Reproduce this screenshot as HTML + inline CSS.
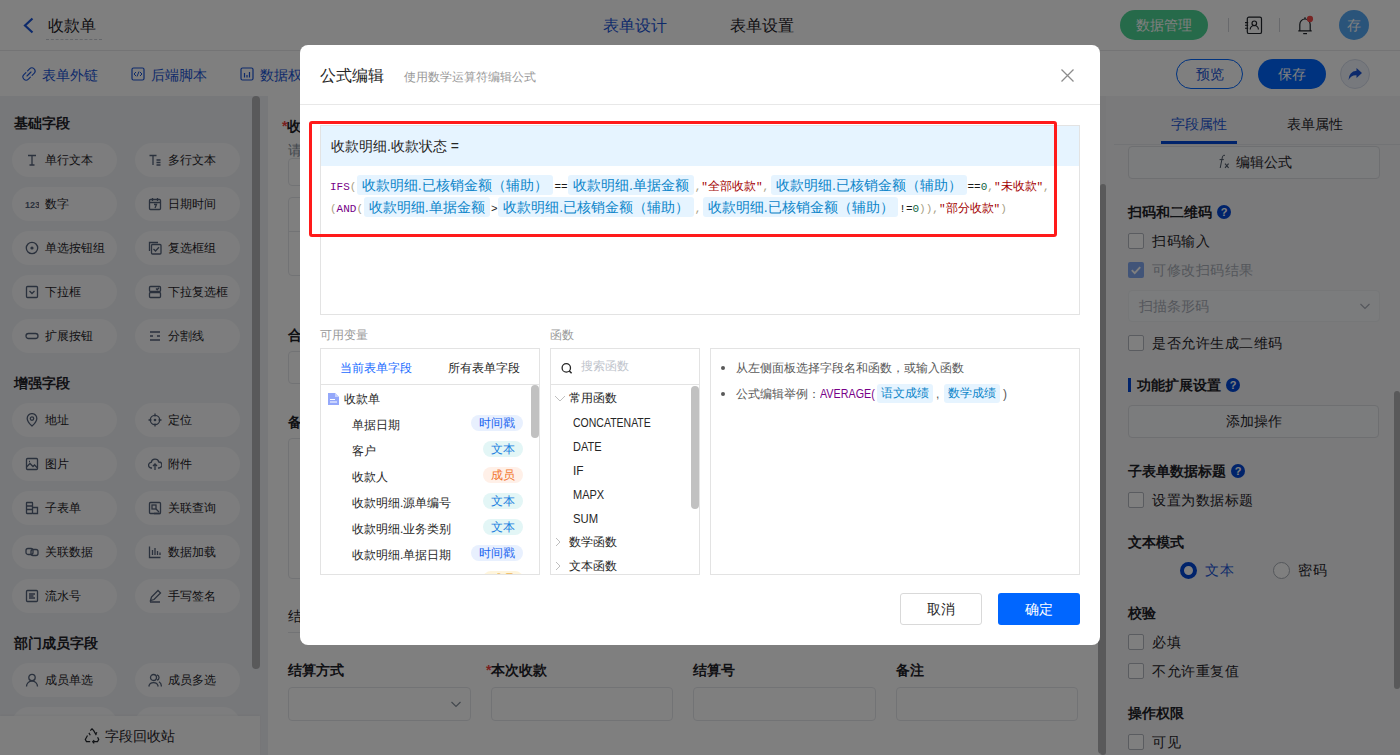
<!DOCTYPE html>
<html><head><meta charset="utf-8">
<style>
*{box-sizing:border-box;margin:0;padding:0}
html,body{width:1400px;height:755px;overflow:hidden;background:#fff}
body{font-family:"Liberation Sans",sans-serif;color:#1f2329;position:relative}
.a{position:absolute;white-space:nowrap}
svg{display:block}
/* header */
#hdr{left:0;top:0;width:1400px;height:51px;background:#fff;border-bottom:1px solid #e8e9eb}
#tb{left:0;top:51px;width:1400px;height:45px;background:#fff}
#lp{left:0;top:96px;width:268px;height:659px;background:#eff0f4}
#cv{left:268px;top:96px;width:838px;height:659px;background:#fff}
#rp{left:1106px;top:96px;width:294px;height:659px;background:#f4f5f6}
.h14b{font-size:14px;font-weight:bold;line-height:20px;color:#1f2329}
.chip{width:105px;height:34px;border-radius:17px;background:#fafbfc;font-size:12px;line-height:34px;color:#1f2329}
.chip i{position:absolute;left:15px;top:11px;width:12px;height:12px}
.chip span{position:absolute;left:33px;top:0}
#mask{left:0;top:0;width:1400px;height:755px;background:rgba(0,0,0,.5)}
#modal{left:300px;top:45px;width:800px;height:600px;background:#fff;border-radius:8px}
.mono{font-family:"Liberation Mono",monospace;font-size:11px;line-height:22px;height:22px}
.cj{font-size:12px}
.fchip{height:20px;border-radius:3px;background:#e6f4ff;color:#0b84c9;font-size:14px;line-height:20.5px;text-align:center}
.hchip{height:19.5px;border-radius:3px;background:#e6f4ff;color:#0b84c9;font-size:12px;line-height:19.5px;text-align:center}
</style></head><body>
<div id="hdr" class="a"></div>
<div id="tb" class="a"></div>
<div id="lp" class="a"></div>
<div id="cv" class="a"></div>
<div id="rp" class="a"></div>

<!-- header content -->
<svg class="a" style="left:22px;top:17px" width="13" height="17" viewBox="0 0 13 17"><path d="M10.5 1.5 L3 8.5 L10.5 15.5" fill="none" stroke="#1b55d6" stroke-width="2.2"/></svg>
<div class="a" style="left:48px;top:16px;font-size:16px;line-height:20px;color:#1f2329">收款单</div>
<div class="a" style="left:46px;top:39px;width:56px;height:0;border-top:1px dashed #c9cdd4"></div>
<div class="a" style="left:603px;top:16px;font-size:16px;line-height:20px;color:#1b55d6">表单设计</div>
<div class="a" style="left:730px;top:16px;font-size:16px;line-height:20px;color:#1f2329">表单设置</div>
<div class="a" style="left:1120px;top:10px;width:88px;height:30px;border-radius:15px;background:#4cd494;color:#fff;font-size:14px;line-height:30px;text-align:center">数据管理</div>
<div class="a" style="left:1228px;top:18px;width:1px;height:14px;background:#d0d3d8"></div>
<svg class="a" style="left:1244px;top:16px" width="20" height="19" viewBox="0 0 20 19"><rect x="3.3" y="1.2" width="14.2" height="16.3" rx="1.6" fill="none" stroke="#1f2329" stroke-width="1.2"/><circle cx="10.3" cy="7.3" r="2.3" fill="none" stroke="#1f2329" stroke-width="1.2"/><path d="M6.2 13.6a4.1 4.1 0 0 1 8.2 0" fill="none" stroke="#1f2329" stroke-width="1.2"/><path d="M1 6.6h3.2M1 9.3h3.2M1 12.2h3.2" stroke="#1f2329" stroke-width="1.1"/></svg>
<div class="a" style="left:1279px;top:18px;width:1px;height:14px;background:#d0d3d8"></div>
<svg class="a" style="left:1295px;top:15px" width="20" height="21" viewBox="0 0 20 21"><path d="M4.8 15.6V9.6a5.2 5.6 0 0 1 10.4 0V15.6M3.3 15.8H16.7" fill="none" stroke="#1f2329" stroke-width="1.2" stroke-linejoin="round"/><path d="M8.2 18.6H12" stroke="#1f2329" stroke-width="1.2"/><path d="M10 2.2V4" stroke="#1f2329" stroke-width="1.2"/><circle cx="15" cy="3.9" r="3.1" fill="#f04a48"/></svg>
<div class="a" style="left:1339px;top:10px;width:30px;height:30px;border-radius:15px;background:#55a8f5;color:#fff;font-size:14px;line-height:30px;text-align:center">存</div>

<!-- toolbar content -->
<svg class="a" style="left:22px;top:67px" width="14" height="14" viewBox="0 0 14 14"><path d="M5.6 3.9L7.6 1.9a2.9 2.9 0 0 1 4.5 4.5L10.1 8.4M8.4 10.1L6.4 12.1a2.9 2.9 0 0 1-4.5-4.5L3.9 5.6M5 9L9 5" fill="none" stroke="#1b55d6" stroke-width="1.1" stroke-linecap="round"/></svg>
<div class="a" style="left:42px;top:65px;font-size:14px;line-height:20px;color:#1b55d6">表单外链</div>
<svg class="a" style="left:131px;top:67px" width="14" height="14" viewBox="0 0 14 14"><rect x="1" y="1" width="12" height="12" rx="1.5" fill="none" stroke="#1b55d6" stroke-width="1.2"/><path d="M5 5 L3 7 L5 9 M9 5 L11 7 L9 9 M8 4.5 L6 9.5" fill="none" stroke="#1b55d6" stroke-width="1"/></svg>
<div class="a" style="left:151px;top:65px;font-size:14px;line-height:20px;color:#1b55d6">后端脚本</div>
<svg class="a" style="left:240px;top:67px" width="14" height="14" viewBox="0 0 14 14"><rect x="1" y="1" width="12" height="12" rx="1.5" fill="none" stroke="#1b55d6" stroke-width="1.2"/><path d="M4.5 6v4.5M7 8v2.5M9.5 5v5.5" stroke="#1b55d6" stroke-width="1.2"/></svg>
<div class="a" style="left:260px;top:65px;font-size:14px;line-height:20px;color:#1b55d6">数据权限</div>
<div class="a" style="left:1176px;top:59px;width:67px;height:30px;border-radius:15px;border:1px solid #0066ff;color:#1b55d6;font-size:14px;line-height:28px;text-align:center">预览</div>
<div class="a" style="left:1258px;top:59px;width:68px;height:30px;border-radius:15px;background:#0066ff;color:#fff;font-size:14px;line-height:30px;text-align:center">保存</div>
<div class="a" style="left:1340px;top:59px;width:30px;height:30px;border-radius:15px;background:#eef2fa;border:1px solid #d5dcea"></div>
<svg class="a" style="left:1347px;top:66px" width="16" height="16" viewBox="0 0 16 16"><path d="M9.5 2 L15 7 L9.5 12 V9.3 Q4 9 1.5 14 Q2 5.5 9.5 4.8 Z" fill="#1b55d6"/></svg>

<!-- left panel -->
<div class="a h14b" style="left:14px;top:113px">基础字段</div>
<div class="a h14b" style="left:14px;top:373px">增强字段</div>
<div class="a h14b" style="left:14px;top:633px">部门成员字段</div>
<div class="a chip" style="left:12px;top:143px"><svg class="a" style="left:13px;top:10px" width="14" height="14" viewBox="0 0 14 14"><path d="M3 2.5h8M7 2.5v9.5M4.5 12h5" stroke="#55627a" fill="none" stroke-width="1.3"/></svg><span>单行文本</span></div>
<div class="a chip" style="left:135px;top:143px"><svg class="a" style="left:13px;top:10px" width="14" height="14" viewBox="0 0 14 14"><path d="M1.5 2.5h7M5 2.5v9.5M8.5 7h4M8.5 9.5h4M8.5 12h4" stroke="#55627a" fill="none" stroke-width="1.3"/></svg><span>多行文本</span></div>
<div class="a chip" style="left:12px;top:187px"><svg class="a" style="left:13px;top:10px" width="14" height="14" viewBox="0 0 14 14"><text x="0" y="10.5" font-size="9" font-weight="bold" font-family="Liberation Sans" fill="#55627a">123</text></svg><span>数字</span></div>
<div class="a chip" style="left:135px;top:187px"><svg class="a" style="left:13px;top:10px" width="14" height="14" viewBox="0 0 14 14"><rect x="1.5" y="2.5" width="11" height="10" rx="1" stroke="#55627a" fill="none" stroke-width="1.3"/><path d="M1.5 5.5h11M4.5 1v3M9.5 1v3M6 7.5h2.5l-1.5 3.5" stroke="#55627a" fill="none" stroke-width="1.3"/></svg><span>日期时间</span></div>
<div class="a chip" style="left:12px;top:231px"><svg class="a" style="left:13px;top:10px" width="14" height="14" viewBox="0 0 14 14"><circle cx="7" cy="7" r="5.7" stroke="#55627a" fill="none" stroke-width="1.3"/><circle cx="7" cy="7" r="1.6" fill="#55627a"/></svg><span>单选按钮组</span></div>
<div class="a chip" style="left:135px;top:231px"><svg class="a" style="left:13px;top:10px" width="14" height="14" viewBox="0 0 14 14"><path d="M1.5 10V1.5H10" stroke="#55627a" fill="none" stroke-width="1.3"/><rect x="3.5" y="3.5" width="9.5" height="9.5" rx="1" stroke="#55627a" fill="none" stroke-width="1.3"/><path d="M5.5 8l2 2 3.5-3.8" stroke="#55627a" fill="none" stroke-width="1.3"/></svg><span>复选框组</span></div>
<div class="a chip" style="left:12px;top:275px"><svg class="a" style="left:13px;top:10px" width="14" height="14" viewBox="0 0 14 14"><rect x="1.5" y="1.5" width="11" height="11" rx="1" stroke="#55627a" fill="none" stroke-width="1.3"/><path d="M4.5 6l2.5 2.5L9.5 6" stroke="#55627a" fill="none" stroke-width="1.3"/></svg><span>下拉框</span></div>
<div class="a chip" style="left:135px;top:275px"><svg class="a" style="left:13px;top:10px" width="14" height="14" viewBox="0 0 14 14"><rect x="1.5" y="1.5" width="11" height="5" rx="1" stroke="#55627a" fill="none" stroke-width="1.3"/><rect x="1.5" y="7.5" width="11" height="5" rx="1" stroke="#55627a" fill="none" stroke-width="1.3"/><path d="M8 3.5l1.2 1.2 1.8-2" stroke="#55627a" fill="none" stroke-width="1.3"/></svg><span>下拉复选框</span></div>
<div class="a chip" style="left:12px;top:319px"><svg class="a" style="left:13px;top:10px" width="14" height="14" viewBox="0 0 14 14"><rect x="1" y="4.5" width="12" height="5" rx="2.5" stroke="#55627a" fill="none" stroke-width="1.3"/></svg><span>扩展按钮</span></div>
<div class="a chip" style="left:135px;top:319px"><svg class="a" style="left:13px;top:10px" width="14" height="14" viewBox="0 0 14 14"><path d="M2 3h10M2 7h3M9 7h3M2 11h10" stroke="#55627a" fill="none" stroke-width="1.3"/></svg><span>分割线</span></div>
<div class="a chip" style="left:12px;top:403px"><svg class="a" style="left:13px;top:10px" width="14" height="14" viewBox="0 0 14 14"><path d="M7 13s-4.8-4.3-4.8-7.6a4.8 4.8 0 0 1 9.6 0C11.8 8.7 7 13 7 13z" stroke="#55627a" fill="none" stroke-width="1.3"/><circle cx="7" cy="5.6" r="1.7" stroke="#55627a" fill="none" stroke-width="1.3"/></svg><span>地址</span></div>
<div class="a chip" style="left:135px;top:403px"><svg class="a" style="left:13px;top:10px" width="14" height="14" viewBox="0 0 14 14"><circle cx="7" cy="7" r="4.7" stroke="#55627a" fill="none" stroke-width="1.3"/><circle cx="7" cy="7" r="1.3" fill="#55627a"/><path d="M7 0.5v3M7 10.5v3M0.5 7h3M10.5 7h3" stroke="#55627a" fill="none" stroke-width="1.3"/></svg><span>定位</span></div>
<div class="a chip" style="left:12px;top:447px"><svg class="a" style="left:13px;top:10px" width="14" height="14" viewBox="0 0 14 14"><rect x="1.5" y="1.5" width="11" height="11" rx="1" stroke="#55627a" fill="none" stroke-width="1.3"/><path d="M1.5 10l3.5-3.5 3 3 1.5-1.5 3 3M4 4.5h1" stroke="#55627a" fill="none" stroke-width="1.3"/></svg><span>图片</span></div>
<div class="a chip" style="left:135px;top:447px"><svg class="a" style="left:13px;top:10px" width="14" height="14" viewBox="0 0 14 14"><path d="M4 11H3.5a2.8 2.8 0 0 1-.3-5.6A3.9 3.9 0 0 1 10.8 5a3 3 0 0 1 .2 6H10M7 7v6M5 9l2-2 2 2" stroke="#55627a" fill="none" stroke-width="1.3"/></svg><span>附件</span></div>
<div class="a chip" style="left:12px;top:491px"><svg class="a" style="left:13px;top:10px" width="14" height="14" viewBox="0 0 14 14"><rect x="1.5" y="1.5" width="6" height="11" rx="0.5" stroke="#55627a" fill="none" stroke-width="1.3"/><path d="M1.5 5h6M1.5 8.5h6M7.5 6.5h5v6h-5" stroke="#55627a" fill="none" stroke-width="1.3"/></svg><span>子表单</span></div>
<div class="a chip" style="left:135px;top:491px"><svg class="a" style="left:13px;top:10px" width="14" height="14" viewBox="0 0 14 14"><rect x="1.5" y="1.5" width="11" height="11" rx="1" stroke="#55627a" fill="none" stroke-width="1.3"/><rect x="4" y="4" width="4" height="4" stroke="#55627a" fill="none" stroke-width="1.3"/><path d="M8 8l3 3M6 12.5h6.5" stroke="#55627a" fill="none" stroke-width="1.3"/></svg><span>关联查询</span></div>
<div class="a chip" style="left:12px;top:535px"><svg class="a" style="left:13px;top:10px" width="14" height="14" viewBox="0 0 14 14"><rect x="1" y="3.5" width="7" height="6" rx="2" stroke="#55627a" fill="none" stroke-width="1.3"/><rect x="6" y="4.5" width="7" height="6" rx="2" stroke="#55627a" fill="none" stroke-width="1.3"/></svg><span>关联数据</span></div>
<div class="a chip" style="left:135px;top:535px"><svg class="a" style="left:13px;top:10px" width="14" height="14" viewBox="0 0 14 14"><path d="M1.5 1.5v11h11M4.5 10V5M7 10V3M9.5 10V6M12 10V7.5" stroke="#55627a" fill="none" stroke-width="1.3"/></svg><span>数据加载</span></div>
<div class="a chip" style="left:12px;top:579px"><svg class="a" style="left:13px;top:10px" width="14" height="14" viewBox="0 0 14 14"><rect x="1.5" y="1.5" width="11" height="11" rx="1" stroke="#55627a" fill="none" stroke-width="1.3"/><path d="M4 5h6M4 7h4.5M4 9h6" stroke="#55627a" fill="none" stroke-width="1.3"/></svg><span>流水号</span></div>
<div class="a chip" style="left:135px;top:579px"><svg class="a" style="left:13px;top:10px" width="14" height="14" viewBox="0 0 14 14"><path d="M2.5 11.5l1-3.5 6.5-6.5 2.5 2.5-6.5 6.5zM2 13h10" stroke="#55627a" fill="none" stroke-width="1.3"/></svg><span>手写签名</span></div>
<div class="a chip" style="left:12px;top:663px"><svg class="a" style="left:13px;top:10px" width="14" height="14" viewBox="0 0 14 14"><circle cx="7" cy="4.5" r="3.2" stroke="#55627a" fill="none" stroke-width="1.3"/><path d="M1.5 13.5a5.5 5.5 0 0 1 11 0" stroke="#55627a" fill="none" stroke-width="1.3"/></svg><span>成员单选</span></div>
<div class="a chip" style="left:135px;top:663px"><svg class="a" style="left:13px;top:10px" width="14" height="14" viewBox="0 0 14 14"><circle cx="5.5" cy="4.5" r="3" stroke="#55627a" fill="none" stroke-width="1.3"/><path d="M0.8 13.5a4.8 4.8 0 0 1 9.4 0M9 1.8a2.8 2.8 0 0 1 0 5.4M11 8.8a4.8 4.8 0 0 1 2.3 4.7" stroke="#55627a" fill="none" stroke-width="1.3"/></svg><span>成员多选</span></div>
<div class="a chip" style="left:12px;top:707px"><svg class="a" style="left:13px;top:10px" width="14" height="14" viewBox="0 0 14 14"><circle cx="7" cy="4.5" r="3.2" stroke="#55627a" fill="none" stroke-width="1.3"/><path d="M1.5 13.5a5.5 5.5 0 0 1 11 0" stroke="#55627a" fill="none" stroke-width="1.3"/></svg><span>部门单选</span></div>
<div class="a chip" style="left:135px;top:707px"><svg class="a" style="left:13px;top:10px" width="14" height="14" viewBox="0 0 14 14"><circle cx="5.5" cy="4.5" r="3" stroke="#55627a" fill="none" stroke-width="1.3"/><path d="M0.8 13.5a4.8 4.8 0 0 1 9.4 0M9 1.8a2.8 2.8 0 0 1 0 5.4M11 8.8a4.8 4.8 0 0 1 2.3 4.7" stroke="#55627a" fill="none" stroke-width="1.3"/></svg><span>部门多选</span></div>
<div class="a" style="left:252px;top:96px;width:8px;height:573px;border-radius:4px;background:#b2b3b5"></div>
<div class="a" style="left:0;top:716px;width:260px;height:39px;background:#fdfdfd;box-shadow:0 -1px 2px rgba(0,0,0,.04)"></div>
<svg class="a" style="left:84px;top:728px" width="16" height="16" viewBox="0 0 16 16"><path d="M6.3 2.6L8 0.8l1.7 1.8 2.6 4.5M13.6 9.2l1.1 2.2-1.2 2.3H9.8M6.2 13.7H2.5L1.3 11.4l2.2-3.9M4.9 4.9l1.4 2.3M11.7 6.3l1.2-2.1M10.2 12.1l-1.5 1.6 1.5 1.6" stroke="#1f2329" fill="none" stroke-width="1.2"/></svg>
<div class="a" style="left:105px;top:726px;font-size:14px;line-height:20px">字段回收站</div>
<!-- canvas -->
<div class="a h14b" style="left:282px;top:116px"><span style="color:#f53f3f">*</span>收款单号</div>
<div class="a" style="left:288px;top:140px;font-size:14px;line-height:20px;color:#86909c">请输入</div>
<div class="a" style="left:288px;top:158px;width:790px;height:28px;border:1px solid #e5e6eb;border-radius:4px;background:#fff"></div>
<div class="a" style="left:288px;top:197px;width:790px;height:79px;border:1px solid #e5e6eb;border-radius:4px;background:#fff"></div>
<div class="a" style="left:289px;top:231px;width:788px;height:1px;background:#e5e6eb"></div>
<div class="a h14b" style="left:288px;top:325px">合计</div>
<div class="a" style="left:288px;top:351px;width:790px;height:33px;border:1px solid #e5e6eb;border-radius:4px;background:#fff"></div>
<div class="a h14b" style="left:288px;top:412px">备注</div>
<div class="a" style="left:288px;top:438px;width:790px;height:141px;border:1px solid #e5e6eb;border-radius:4px;background:#fff"></div>
<div class="a h14b" style="left:288px;top:606px;font-weight:normal">结算信息</div>
<div class="a" style="left:288px;top:632px;width:790px;height:1px;background:#e5e6eb"></div>
<div class="a h14b" style="left:288px;top:660px">结算方式</div>
<div class="a h14b" style="left:486px;top:660px"><span style="color:#f53f3f">*</span>本次收款</div>
<div class="a h14b" style="left:693px;top:660px">结算号</div>
<div class="a h14b" style="left:896px;top:660px">备注</div>
<div class="a" style="left:288px;top:687px;width:183px;height:34px;border:1px solid #e5e6eb;border-radius:4px;background:#fff"></div>
<div class="a" style="left:491px;top:687px;width:182px;height:34px;border:1px solid #e5e6eb;border-radius:4px;background:#fff"></div>
<div class="a" style="left:693px;top:687px;width:183px;height:34px;border:1px solid #e5e6eb;border-radius:4px;background:#fff"></div>
<div class="a" style="left:896px;top:687px;width:182px;height:34px;border:1px solid #e5e6eb;border-radius:4px;background:#fff"></div>
<svg class="a" style="left:450px;top:699px" width="12" height="10" viewBox="0 0 12 10"><path d="M1.5 3l4.5 4.5L10.5 3" fill="none" stroke="#86909c" stroke-width="1.2"/></svg>
<div class="a" style="left:1098px;top:184px;width:8px;height:570px;border-radius:4px;background:#b2b3b5"></div>

<!-- right panel -->
<div class="a" style="left:1171px;top:114px;font-size:14px;line-height:20px;color:#1b55d6">字段属性</div>
<div class="a" style="left:1287px;top:114px;font-size:14px;line-height:20px;color:#1f2329">表单属性</div>
<div class="a" style="left:1114px;top:144px;width:286px;height:1px;background:#e5e6eb"></div>
<div class="a" style="left:1161px;top:141px;width:76px;height:3px;background:#0047d6"></div>
<div class="a" style="left:1128px;top:146px;width:252px;height:33px;border:1px solid #dcdee2;border-radius:4px;background:#f7f8fa"></div>
<svg class="a" style="left:1217px;top:154px" width="14" height="15" viewBox="0 0 14 15"><path d="M8 1.3Q6 0.6 5.4 3L3.2 14M2.6 5.6H6.8" fill="none" stroke="#4e5969" stroke-width="1"/><path d="M8 9.6L11.6 13.8M11.6 9.6L8 13.8" stroke="#4e5969" stroke-width="1.1"/></svg>
<div class="a" style="left:1236px;top:152px;font-size:14px;line-height:20px;color:#1f2329">编辑公式</div>
<div class="a h14b" style="left:1128px;top:202px">扫码和二维码</div><div class="a" style="left:1217px;top:205px;width:14px;height:14px;border-radius:7px;background:#0047d6;color:#fff;font-size:11px;font-weight:bold;line-height:14px;text-align:center">?</div>
<div class="a" style="left:1128px;top:233px;width:16px;height:16px;border-radius:2px;border:1px solid #b4b8c0;background:#fff"></div><div class="a" style="left:1152px;top:231px;font-size:14px;line-height:20px;letter-spacing:0.5px;color:#1f2329">扫码输入</div>
<div class="a" style="left:1128px;top:262px;width:16px;height:16px;border-radius:2px;background:#82a8f0"></div><svg class="a" style="left:1130px;top:264px" width="12" height="12" viewBox="0 0 12 12"><path d="M1.8 6.2l2.9 2.9 5.5-6" fill="none" stroke="#fff" stroke-width="1.9"/></svg><div class="a" style="left:1152px;top:260px;font-size:14px;line-height:20px;letter-spacing:0.5px;color:#a9aeb8">可修改扫码结果</div>
<div class="a" style="left:1128px;top:290px;width:252px;height:32px;border:1px solid #eceef1;border-radius:4px;background:#f7f8fa"></div>
<div class="a" style="left:1139px;top:296px;font-size:14px;line-height:20px;color:#a9aeb8">扫描条形码</div>
<svg class="a" style="left:1359px;top:301px" width="12" height="10" viewBox="0 0 12 10"><path d="M1.5 3l4.5 4.5L10.5 3" fill="none" stroke="#a9aeb8" stroke-width="1.2"/></svg>
<div class="a" style="left:1128px;top:335px;width:16px;height:16px;border-radius:2px;border:1px solid #b4b8c0;background:#fff"></div><div class="a" style="left:1152px;top:333px;font-size:14px;line-height:20px;letter-spacing:0.5px;color:#1f2329">是否允许生成二维码</div>
<div class="a" style="left:1128px;top:378px;width:3px;height:14px;background:#0047d6"></div>
<div class="a h14b" style="left:1137px;top:375px">功能扩展设置</div><div class="a" style="left:1226px;top:378px;width:14px;height:14px;border-radius:7px;background:#0047d6;color:#fff;font-size:11px;font-weight:bold;line-height:14px;text-align:center">?</div>
<div class="a" style="left:1128px;top:405px;width:251px;height:33px;border:1px solid #dcdee2;border-radius:4px;background:#f7f8fa;text-align:center;font-size:14px;line-height:31px;color:#1f2329">添加操作</div>
<div class="a h14b" style="left:1128px;top:461px">子表单数据标题</div><div class="a" style="left:1231px;top:464px;width:14px;height:14px;border-radius:7px;background:#0047d6;color:#fff;font-size:11px;font-weight:bold;line-height:14px;text-align:center">?</div>
<div class="a" style="left:1128px;top:492px;width:16px;height:16px;border-radius:2px;border:1px solid #b4b8c0;background:#fff"></div><div class="a" style="left:1152px;top:490px;font-size:14px;line-height:20px;letter-spacing:0.5px;color:#1f2329">设置为数据标题</div>
<div class="a h14b" style="left:1128px;top:532px">文本模式</div>
<div class="a" style="left:1180px;top:562px;width:17px;height:17px;border-radius:9px;border:4.5px solid #0047d6;background:#fff"></div>
<div class="a" style="left:1205px;top:560px;font-size:14px;line-height:20px;letter-spacing:0.5px;color:#1b55d6">文本</div>
<div class="a" style="left:1273px;top:562px;width:17px;height:17px;border-radius:9px;border:1px solid #a9aeb6;background:#fff"></div>
<div class="a" style="left:1298px;top:560px;font-size:14px;line-height:20px;letter-spacing:0.5px;color:#1f2329">密码</div>
<div class="a h14b" style="left:1128px;top:603px">校验</div>
<div class="a" style="left:1128px;top:634px;width:16px;height:16px;border-radius:2px;border:1px solid #b4b8c0;background:#fff"></div><div class="a" style="left:1152px;top:632px;font-size:14px;line-height:20px;letter-spacing:0.5px;color:#1f2329">必填</div>
<div class="a" style="left:1128px;top:663px;width:16px;height:16px;border-radius:2px;border:1px solid #b4b8c0;background:#fff"></div><div class="a" style="left:1152px;top:661px;font-size:14px;line-height:20px;letter-spacing:0.5px;color:#1f2329">不允许重复值</div>
<div class="a h14b" style="left:1128px;top:703px">操作权限</div>
<div class="a" style="left:1128px;top:734px;width:16px;height:16px;border-radius:2px;border:1px solid #b4b8c0;background:#fff"></div><div class="a" style="left:1152px;top:732px;font-size:14px;line-height:20px;letter-spacing:0.5px;color:#1f2329">可见</div>
<div class="a" style="left:1394px;top:391px;width:6px;height:298px;border-radius:3px;background:#b2b3b5"></div>
<div class="a" style="left:1100px;top:96px;width:6px;height:659px;background:#f0f1f2"></div>
<div class="a" style="left:1100px;top:184px;width:6px;height:571px;border-radius:3px;background:#b2b3b5"></div>

<div id="mask" class="a"></div>
<div id="modal" class="a"></div>
<!-- modal content -->
<div class="a" style="left:320px;top:66px;font-size:16px;line-height:20px;color:#262626">公式编辑</div>
<div class="a" style="left:404px;top:68px;font-size:12px;line-height:18px;color:#999">使用数学运算符编辑公式</div>
<svg class="a" style="left:1060px;top:68px" width="15" height="15" viewBox="0 0 15 15"><path d="M1.5 1.5L13.5 13.5M13.5 1.5L1.5 13.5" stroke="#8c8c8c" stroke-width="1.3"/></svg>
<div class="a" style="left:300px;top:104px;width:800px;height:1px;background:#e8e8e8"></div>
<div class="a" style="left:320px;top:125px;width:760px;height:190px;border:1px solid #e3e3e3;background:#fff"></div>
<div class="a" style="left:321px;top:126px;width:758px;height:40px;background:#e6f4ff"></div>
<div class="a" style="left:331px;top:136px;font-size:14px;line-height:20px;color:#262626">收款明细.收款状态 =</div>
<div class="a mono" style="left:330px;top:176.0px"><span style="color:#770088">IFS</span><span style="color:#a89f86">(</span></div>
<div class="a fchip" style="left:357px;top:175px;width:195.5px">收款明细.已核销金额（辅助）</div>
<div class="a mono" style="left:554.5px;top:176.0px"><span style="color:#1a1a1a">==</span></div>
<div class="a fchip" style="left:568px;top:175px;width:126px">收款明细.单据金额</div>
<div class="a mono" style="left:694.7px;top:176.0px"><span style="color:#a89f86">,</span></div>
<div class="a mono" style="left:701.3px;top:176.0px;color:#a30000">"<span class="cj">全部收款</span>"</div>
<div class="a mono" style="left:762.5px;top:176.0px"><span style="color:#a89f86">,</span></div>
<div class="a fchip" style="left:771px;top:175px;width:196px">收款明细.已核销金额（辅助）</div>
<div class="a mono" style="left:967.5px;top:176.0px"><span style="color:#1a1a1a">==</span><span style="color:#116644">0</span><span style="color:#a89f86">,</span></div>
<div class="a mono" style="left:993.9px;top:176.0px;color:#a30000">"<span class="cj">未收款</span>"</div>
<div class="a mono" style="left:1043px;top:176.0px"><span style="color:#a89f86">,</span></div>
<div class="a mono" style="left:330px;top:198.0px"><span style="color:#a89f86">(</span><span style="color:#770088">AND</span><span style="color:#a89f86">(</span></div>
<div class="a fchip" style="left:364px;top:197px;width:125.5px">收款明细.单据金额</div>
<div class="a mono" style="left:491px;top:198.0px"><span style="color:#1a1a1a">&gt;</span></div>
<div class="a fchip" style="left:498.3px;top:197px;width:195.7px">收款明细.已核销金额（辅助）</div>
<div class="a mono" style="left:694.7px;top:198.0px"><span style="color:#a89f86">,</span></div>
<div class="a fchip" style="left:703.2px;top:197px;width:195.2px">收款明细.已核销金额（辅助）</div>
<div class="a mono" style="left:899.3px;top:198.0px"><span style="color:#1a1a1a">!=</span><span style="color:#116644">0</span><span style="color:#a89f86">))</span><span style="color:#a89f86">,</span></div>
<div class="a mono" style="left:939px;top:198.0px;color:#a30000">"<span class="cj">部分收款</span>"</div>
<div class="a mono" style="left:1000.2px;top:198.0px"><span style="color:#a89f86">)</span></div>
<div class="a" style="left:320px;top:326px;font-size:12px;line-height:18px;color:#999">可用变量</div>
<div class="a" style="left:550px;top:326px;font-size:12px;line-height:18px;color:#999">函数</div>
<div class="a" style="left:320px;top:348px;width:220px;height:227px;border:1px solid #e3e3e3;background:#fff"></div>
<div class="a" style="left:321px;top:384px;width:218px;height:1px;background:#e3e3e3"></div>
<div class="a" style="left:340px;top:359px;font-size:12px;line-height:18px;color:#1a6cff">当前表单字段</div>
<div class="a" style="left:448px;top:359px;font-size:12px;line-height:18px;color:#262626">所有表单字段</div>
<svg class="a" style="left:328px;top:393px" width="11" height="12" viewBox="0 0 11 12"><path d="M0 0h7l4 4v8H0z" fill="#94a8fa"/><path d="M7 0v4h4" fill="#c5d1fd"/><path d="M2 6.5h5M2 9h7" stroke="#fff" stroke-width="1"/></svg>
<div class="a" style="left:344px;top:390px;font-size:12px;line-height:18px;color:#262626">收款单</div>
<div class="a" style="left:352px;top:415.5px;font-size:12px;line-height:18px;color:#262626">单据日期</div>
<div class="a" style="left:471px;top:415.0px;width:52px;height:16px;border-radius:8px;background:#e8f0fe;color:#2065f0;font-size:12px;line-height:16px;text-align:center">时间戳</div>
<div class="a" style="left:352px;top:441.5px;font-size:12px;line-height:18px;color:#262626">客户</div>
<div class="a" style="left:483px;top:441.0px;width:40px;height:16px;border-radius:8px;background:#e3f6f6;color:#1a7fe0;font-size:12px;line-height:16px;text-align:center">文本</div>
<div class="a" style="left:352px;top:467.5px;font-size:12px;line-height:18px;color:#262626">收款人</div>
<div class="a" style="left:483px;top:467.0px;width:40px;height:16px;border-radius:8px;background:#fff0e8;color:#f2762e;font-size:12px;line-height:16px;text-align:center">成员</div>
<div class="a" style="left:352px;top:493.5px;font-size:12px;line-height:18px;color:#262626">收款明细.源单编号</div>
<div class="a" style="left:483px;top:493.0px;width:40px;height:16px;border-radius:8px;background:#e3f6f6;color:#1a7fe0;font-size:12px;line-height:16px;text-align:center">文本</div>
<div class="a" style="left:352px;top:519.5px;font-size:12px;line-height:18px;color:#262626">收款明细.业务类别</div>
<div class="a" style="left:483px;top:519.0px;width:40px;height:16px;border-radius:8px;background:#e3f6f6;color:#1a7fe0;font-size:12px;line-height:16px;text-align:center">文本</div>
<div class="a" style="left:352px;top:545.5px;font-size:12px;line-height:18px;color:#262626">收款明细.单据日期</div>
<div class="a" style="left:471px;top:545.0px;width:52px;height:16px;border-radius:8px;background:#e8f0fe;color:#2065f0;font-size:12px;line-height:16px;text-align:center">时间戳</div>
<div class="a" style="left:352px;top:571.5px;font-size:12px;line-height:18px;color:#262626">收款明细.经办人</div>
<div class="a" style="left:483px;top:571.0px;width:40px;height:16px;border-radius:8px;background:#fff5dc;color:#e89a10;font-size:12px;line-height:16px;text-align:center">成员</div>
<div class="a" style="left:321px;top:574px;width:218px;height:20px;background:#fff"></div>
<div class="a" style="left:320px;top:574px;width:220px;height:1px;background:#e3e3e3"></div>
<div class="a" style="left:531px;top:385px;width:8px;height:53px;border-radius:4px;background:#c1c1c1"></div>
<div class="a" style="left:550px;top:348px;width:150px;height:227px;border:1px solid #e3e3e3;background:#fff"></div>
<div class="a" style="left:551px;top:384px;width:148px;height:1px;background:#e3e3e3"></div>
<svg class="a" style="left:561px;top:363px" width="12" height="11" viewBox="0 0 12 11"><circle cx="5.3" cy="4.9" r="4.2" fill="none" stroke="#262626" stroke-width="1.3"/><path d="M8.3 7.9L10.6 10.3" stroke="#262626" stroke-width="1.5"/></svg>
<div class="a" style="left:581px;top:357px;font-size:12px;line-height:18px;color:#c0c4cc">搜索函数</div>
<svg class="a" style="left:554px;top:394px" width="12" height="9" viewBox="0 0 12 9"><path d="M1 2l5 5 5-5" fill="none" stroke="#bfbfbf" stroke-width="1"/></svg>
<div class="a" style="left:569px;top:389px;font-size:12px;line-height:18px;color:#262626">常用函数</div>
<div class="a" style="left:573px;top:413.6px;font-size:12.5px;line-height:18px;color:#262626;transform:scaleX(0.84);transform-origin:0 0">CONCATENATE</div>
<div class="a" style="left:573px;top:437.6px;font-size:12.5px;line-height:18px;color:#262626;transform:scaleX(0.88);transform-origin:0 0">DATE</div>
<div class="a" style="left:573px;top:461.6px;font-size:12.5px;line-height:18px;color:#262626;transform:scaleX(0.95);transform-origin:0 0">IF</div>
<div class="a" style="left:573px;top:485.6px;font-size:12.5px;line-height:18px;color:#262626;transform:scaleX(0.88);transform-origin:0 0">MAPX</div>
<div class="a" style="left:573px;top:509.6px;font-size:12.5px;line-height:18px;color:#262626;transform:scaleX(0.9);transform-origin:0 0">SUM</div>
<svg class="a" style="left:555px;top:537px" width="6" height="10" viewBox="0 0 6 10"><path d="M1 1l4 4-4 4" fill="none" stroke="#bfbfbf" stroke-width="1"/></svg>
<div class="a" style="left:569px;top:533px;font-size:12px;line-height:18px;color:#262626">数学函数</div>
<svg class="a" style="left:555px;top:561px" width="6" height="10" viewBox="0 0 6 10"><path d="M1 1l4 4-4 4" fill="none" stroke="#bfbfbf" stroke-width="1"/></svg>
<div class="a" style="left:569px;top:557px;font-size:12px;line-height:18px;color:#262626">文本函数</div>
<div class="a" style="left:691px;top:386px;width:7.5px;height:123px;border-radius:4px;background:#c1c1c1"></div>
<div class="a" style="left:710px;top:348px;width:370px;height:227px;border:1px solid #e3e3e3;background:#fff"></div>
<div class="a" style="left:721px;top:366px;width:4px;height:4px;border-radius:2px;background:#595959"></div>
<div class="a" style="left:736px;top:359px;font-size:12px;line-height:18px;color:#595959">从左侧面板选择字段名和函数，或输入函数</div>
<div class="a" style="left:721px;top:391.5px;width:4px;height:4px;border-radius:2px;background:#595959"></div>
<div class="a" style="left:736px;top:384.5px;font-size:12px;line-height:18px;color:#595959">公式编辑举例：</div>
<div class="a" style="left:820px;top:384.5px;font-size:12.5px;line-height:18px;color:#770088;transform:scaleX(0.86);transform-origin:0 0">AVERAGE(</div>
<div class="a hchip" style="left:877px;top:383.5px;width:55.5px">语文成绩</div>
<div class="a" style="left:936px;top:384.5px;font-size:12px;line-height:18px;color:#595959">,</div>
<div class="a hchip" style="left:944px;top:383.5px;width:55.5px">数学成绩</div>
<div class="a" style="left:1003px;top:384.5px;font-size:12px;line-height:18px;color:#595959">)</div>
<div class="a" style="left:900px;top:593px;width:82px;height:32px;border:1px solid #d9d9d9;border-radius:3px;background:#fff;font-size:14px;line-height:30px;text-align:center;color:#262626">取消</div>
<div class="a" style="left:998px;top:593px;width:82px;height:32px;border-radius:3px;background:#0066ff;font-size:14px;line-height:32px;text-align:center;color:#fff">确定</div>
<div class="a" style="left:309px;top:121px;width:748px;height:116px;border:3px solid #ff1a1a;border-radius:3px"></div>
</body></html>
